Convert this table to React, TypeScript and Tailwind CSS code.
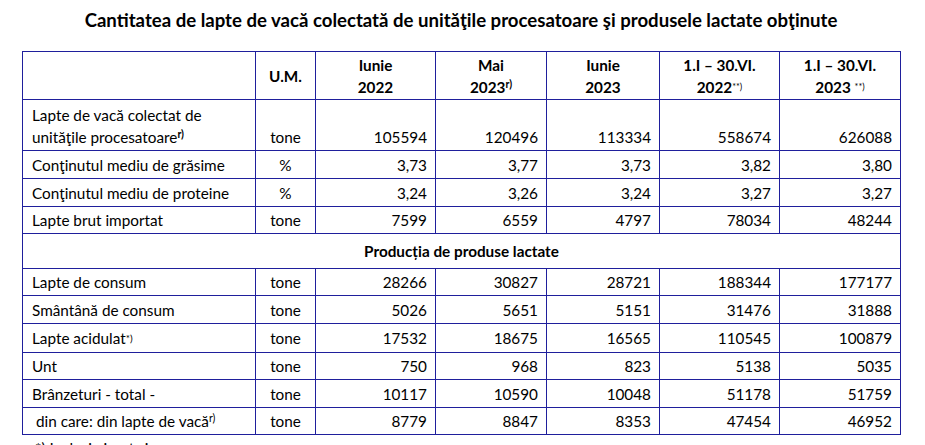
import React from "react";

const B = "border border-[#1f1f9c]";

type Row = { label: React.ReactNode; um: string; v: string[]; h: string };

const Sup = ({ children, bold }: { children: React.ReactNode; bold?: boolean }) => (
  <span className={`text-[10.5px] leading-[0] align-[5px] ${bold ? "font-bold" : "font-normal"}`}>{children}</span>
);

const rowsA: Row[] = [
  { label: "Conţinutul mediu de grăsime", um: "%", v: ["3,73", "3,77", "3,73", "3,82", "3,80"], h: "h-[28px]" },
  { label: "Conţinutul mediu de proteine", um: "%", v: ["3,24", "3,26", "3,24", "3,27", "3,27"], h: "h-[28px]" },
  { label: "Lapte brut importat", um: "tone", v: ["7599", "6559", "4797", "78034", "48244"], h: "h-[27px]" },
];

const rowsB: Row[] = [
  { label: "Lapte de consum", um: "tone", v: ["28266", "30827", "28721", "188344", "177177"], h: "h-[27px]" },
  { label: "Smântână de consum", um: "tone", v: ["5026", "5651", "5151", "31476", "31888"], h: "h-[28px]" },
  {
    label: (
      <>
        Lapte acidulat<span className="text-[10px] leading-[0] align-[2px]">*)</span>
      </>
    ),
    um: "tone",
    v: ["17532", "18675", "16565", "110545", "100879"],
    h: "h-[29px]",
  },
  { label: "Unt", um: "tone", v: ["750", "968", "823", "5138", "5035"], h: "h-[27px]" },
  { label: "Brânzeturi - total -", um: "tone", v: ["10117", "10590", "10048", "51178", "51759"], h: "h-[28px]" },
  {
    label: (
      <span className="pl-[4px]">
        din care: din lapte de vacă<Sup>r)</Sup>
      </span>
    ),
    um: "tone",
    v: ["8779", "8847", "8353", "47454", "46952"],
    h: "h-[27px]",
  },
];

function DataRow({ r }: { r: Row }) {
  return (
    <tr className={r.h}>
      <td className={`${B} pl-[9px] text-left`}>{r.label}</td>
      <td className={`${B} text-center`}>{r.um}</td>
      {r.v.map((x, i) => (
        <td key={i} className={`${B} text-right pr-[8px]`}>
          {x}
        </td>
      ))}
    </tr>
  );
}

export default function App() {
  return (
    <div
      className="w-[925px] h-[445px] overflow-hidden bg-white text-black"
      style={{ fontFamily: "Lato, 'Open Sans', sans-serif" }}
    >
      <div className="pl-[22px] w-[900px]">
        <h1 className="text-center font-bold text-[18.6px] leading-[24px] pt-[8px] pb-[19px] whitespace-nowrap">
          Cantitatea de lapte de vacă colectată de unităţile procesatoare şi produsele lactate obţinute
        </h1>
        <table className="table-fixed border-collapse w-[878px] text-[15.3px] leading-[22px]">
          <colgroup>
            <col className="w-[233px]" />
            <col className="w-[60px]" />
            <col className="w-[120px]" />
            <col className="w-[111px]" />
            <col className="w-[113px]" />
            <col className="w-[120px]" />
            <col className="w-[121px]" />
          </colgroup>
          <tbody>
            <tr className="h-[48px] font-bold">
              <td className={B}></td>
              <td className={`${B} text-center`}>U.M.</td>
              <td className={`${B} text-center`}>
                Iunie
                <br />
                2022
              </td>
              <td className={`${B} text-center`}>
                Mai
                <br />
                2023<Sup bold>r)</Sup>
              </td>
              <td className={`${B} text-center`}>
                Iunie
                <br />
                2023
              </td>
              <td className={`${B} text-center`}>
                1.I – 30.VI.
                <br />
                2022<span className="text-[9px] font-normal leading-[0] align-[3px]">**)</span>
              </td>
              <td className={`${B} text-center`}>
                1.I – 30.VI.
                <br />
                2023 <span className="text-[9px] font-normal leading-[0] align-[3px]">**)</span>
              </td>
            </tr>
            <tr className="h-[51px]">
              <td className={`${B} pl-[9px] text-left align-bottom pb-[2px]`}>
                Lapte de vacă colectat de
                <br />
                unităţile procesatoare<Sup bold>r)</Sup>
              </td>
              <td className={`${B} text-center align-bottom pb-[2px]`}>tone</td>
              {["105594", "120496", "113334", "558674", "626088"].map((x, i) => (
                <td key={i} className={`${B} text-right pr-[8px] align-bottom pb-[2px]`}>
                  {x}
                </td>
              ))}
            </tr>
            {rowsA.map((r, i) => (
              <DataRow key={i} r={r} />
            ))}
            <tr className="h-[35px]">
              <td colSpan={7} className={`${B} text-center font-bold`}>
                Producția de produse lactate
              </td>
            </tr>
            {rowsB.map((r, i) => (
              <DataRow key={i} r={r} />
            ))}
          </tbody>
        </table>
        <div className="pl-[13px] pt-[3px] text-[15.3px] leading-[20px]">*) Inclusiv iaurt şi sana</div>
      </div>
    </div>
  );
}
